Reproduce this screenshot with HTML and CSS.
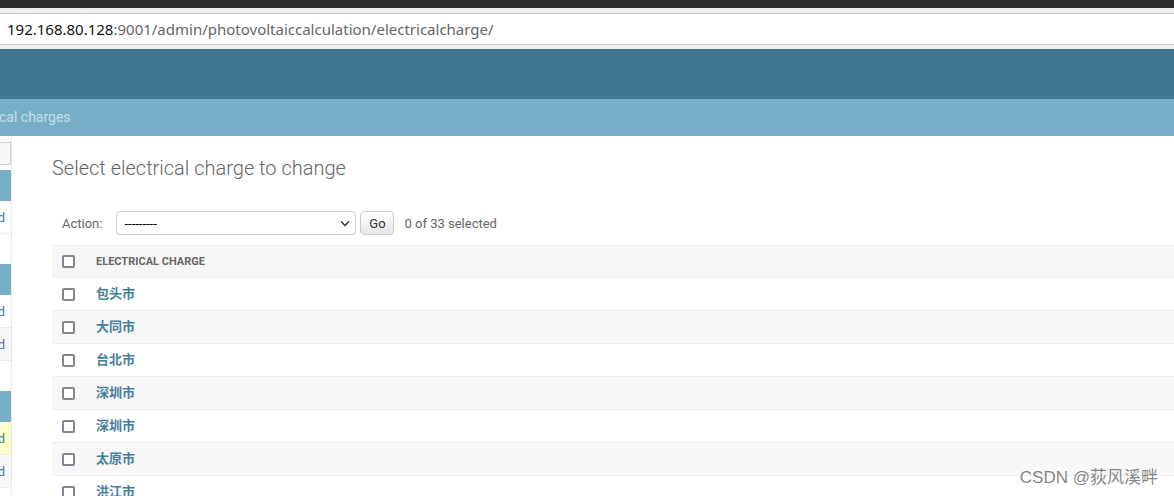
FILE: index.html
```html
<!DOCTYPE html>
<html lang="en">
<head>
    <meta charset="UTF-8">
    <title>Select electrical charge to change</title>
    <link rel="stylesheet" href="styles.css">
</head>
<body>
    <div class="browser">
        <div class="titlebar"></div>
        <div class="url-band">
            <div class="urlbar"><span class="host">192.168.80.128</span><span class="path">:9001/admin/photovoltaiccalculation/electricalcharge/</span></div>
        </div>
    </div>

    <div class="header"></div>
    <div class="breadcrumbs">cal charges</div>

    <div class="main">
        <nav class="sidebar">
            <div class="nav-filter"></div>

            <div class="module">
                <div class="caption"></div>
                <div class="nav-row"><a href="#">Add</a></div>
            </div>

            <div class="module">
                <div class="caption"></div>
                <div class="nav-row"><a href="#">Add</a></div>
                <div class="nav-row alt"><a href="#">Add</a></div>
            </div>

            <div class="module">
                <div class="caption"></div>
                <div class="nav-row current"><a href="#">Add</a></div>
                <div class="nav-row alt"><a href="#">Add</a></div>
            </div>
        </nav>

        <div class="content">
            <h1>Select electrical charge to change</h1>

            <div class="actions">
                <label>Action:</label>
                <div class="select-wrap">
                    <select class="action-select">
                        <option>---------</option>
                    </select>
                    <svg class="chevron" width="10" height="7" viewBox="0 0 10 7">
                        <path d="M1 1.5 L5 5.5 L9 1.5" fill="none" stroke="#333" stroke-width="1.5"/>
                    </svg>
                </div>
                <button class="go-btn">Go</button>
                <span class="counter">0 of 33 selected</span>
            </div>

            <table class="result-list">
                <thead>
                    <tr>
                        <th class="check-col"><input type="checkbox"></th>
                        <th>Electrical charge</th>
                    </tr>
                </thead>
                <tbody>
                    <tr><td class="check-col"><input type="checkbox"></td><th><a href="#">包头市</a></th></tr>
                    <tr><td class="check-col"><input type="checkbox"></td><th><a href="#">大同市</a></th></tr>
                    <tr><td class="check-col"><input type="checkbox"></td><th><a href="#">台北市</a></th></tr>
                    <tr><td class="check-col"><input type="checkbox"></td><th><a href="#">深圳市</a></th></tr>
                    <tr><td class="check-col"><input type="checkbox"></td><th><a href="#">深圳市</a></th></tr>
                    <tr><td class="check-col"><input type="checkbox"></td><th><a href="#">太原市</a></th></tr>
                    <tr><td class="check-col"><input type="checkbox"></td><th><a href="#">洪江市</a></th></tr>
                    <tr><td class="check-col"><input type="checkbox"></td><th><a href="#">北京市</a></th></tr>
                </tbody>
            </table>
        </div>
    </div>

    <div class="watermark">CSDN @荻风溪畔</div>
</body>
</html>
```

FILE: styles.css
```css
* {
    margin: 0;
    padding: 0;
    box-sizing: border-box;
}

body {
    font-family: Roboto, "Noto Sans CJK SC", sans-serif;
    font-size: 13px;
    color: #333;
    background: white;
    width: 1174px;
    height: 496px;
    overflow: hidden;
    position: relative;
}

a {
    color: #447e9b;
    text-decoration: none;
}

/* browser chrome */
.titlebar {
    height: 8px;
    background: #2c2c2c;
}

.url-band {
    background: #efefef;
    padding: 5px 0 4px;
}

.urlbar {
    height: 32px;
    background: white;
    border-top: 1px solid #c8c8c8;
    border-bottom: 1px solid #c8c8c8;
    padding-left: 7px;
    font-family: "Noto Sans", sans-serif;
    font-size: 15px;
    line-height: 30px;
    white-space: nowrap;
}

.host {
    color: #111;
}

.path {
    color: #666;
}

/* admin header */
.header {
    height: 50px;
    background: #417690;
}

.breadcrumbs {
    height: 37px;
    background: #79aec8;
    color: #c4dce8;
    font-size: 14px;
    line-height: 37px;
    margin-left: -1px;
    white-space: nowrap;
}

.main {
    display: flex;
    height: 360px;
}

/* clipped nav sidebar */
.sidebar {
    width: 12px;
    flex-shrink: 0;
    border-right: 1px solid #eaeaea;
    padding-top: 6px;
    overflow: hidden;
}

.nav-filter {
    height: 23px;
    background: #f8f8f8;
    border: 1px solid #ccc;
    border-left: none;
    margin-bottom: 5px;
}

.module {
    margin-bottom: 30px;
}

.caption {
    height: 31px;
    background: #79aec8;
}

.nav-row {
    height: 33px;
    border-bottom: 1px solid #eee;
    display: flex;
    align-items: center;
    justify-content: flex-end;
    padding-right: 6px;
    white-space: nowrap;
}

.nav-row a {
    flex-shrink: 0;
}

.nav-row.alt {
    background: #f8f8f8;
}

.nav-row.current {
    background: #ffc;
}

/* changelist */
.content {
    flex: 1;
    padding: 20px 0 0 40px;
}

h1 {
    font-size: 20px;
    font-weight: 300;
    color: #666;
    line-height: 24px;
    margin-bottom: 21px;
}

.actions {
    display: flex;
    align-items: center;
    padding: 10px;
    height: 44px;
    color: #666;
}

.actions label {
    margin-right: 14px;
}

.select-wrap {
    position: relative;
    margin-right: 4px;
}

.action-select {
    appearance: none;
    -webkit-appearance: none;
    width: 240px;
    height: 24px;
    border: 1px solid #ccc;
    border-radius: 4px;
    background: white;
    color: #000;
    font-family: inherit;
    font-size: 13px;
    padding-left: 7px;
}

.chevron {
    position: absolute;
    right: 6px;
    top: 9px;
}

.go-btn {
    height: 24px;
    width: 34px;
    border: 1px solid #ccc;
    border-radius: 4px;
    background: white;
    box-shadow: 0 -15px 20px -10px rgba(0, 0, 0, 0.15) inset;
    font-family: inherit;
    font-size: 13px;
    color: #333;
    margin-right: 10px;
}

.result-list {
    width: 100%;
    border-collapse: collapse;
}

.result-list thead th {
    background: #f6f6f6;
    border-top: 1px solid #eee;
    border-bottom: 1px solid #eee;
    padding: 8px 10px;
    line-height: 15px;
    font-size: 11px;
    font-weight: 700;
    text-transform: uppercase;
    color: #666;
    text-align: left;
}

.result-list td,
.result-list tbody th {
    padding: 8px 10px;
    line-height: 16px;
    border-bottom: 1px solid #eee;
    text-align: left;
    vertical-align: middle;
}

.result-list tbody th {
    font-weight: 700;
    font-size: 13px;
}

.result-list tbody tr:nth-child(even) {
    background: #f8f8f8;
}

.result-list .check-col {
    width: 34px;
    padding-right: 0;
    vertical-align: middle;
}

.result-list input[type="checkbox"] {
    appearance: none;
    -webkit-appearance: none;
    display: block;
    width: 13px;
    height: 13px;
    border: 2px solid #878393;
    border-radius: 2px;
    background: white;
}

.watermark {
    position: absolute;
    right: 16px;
    bottom: 8px;
    font-family: "Liberation Sans", "Noto Sans CJK SC", sans-serif;
    font-size: 17px;
    color: rgba(110, 110, 110, 0.85);
    white-space: nowrap;
}
```
